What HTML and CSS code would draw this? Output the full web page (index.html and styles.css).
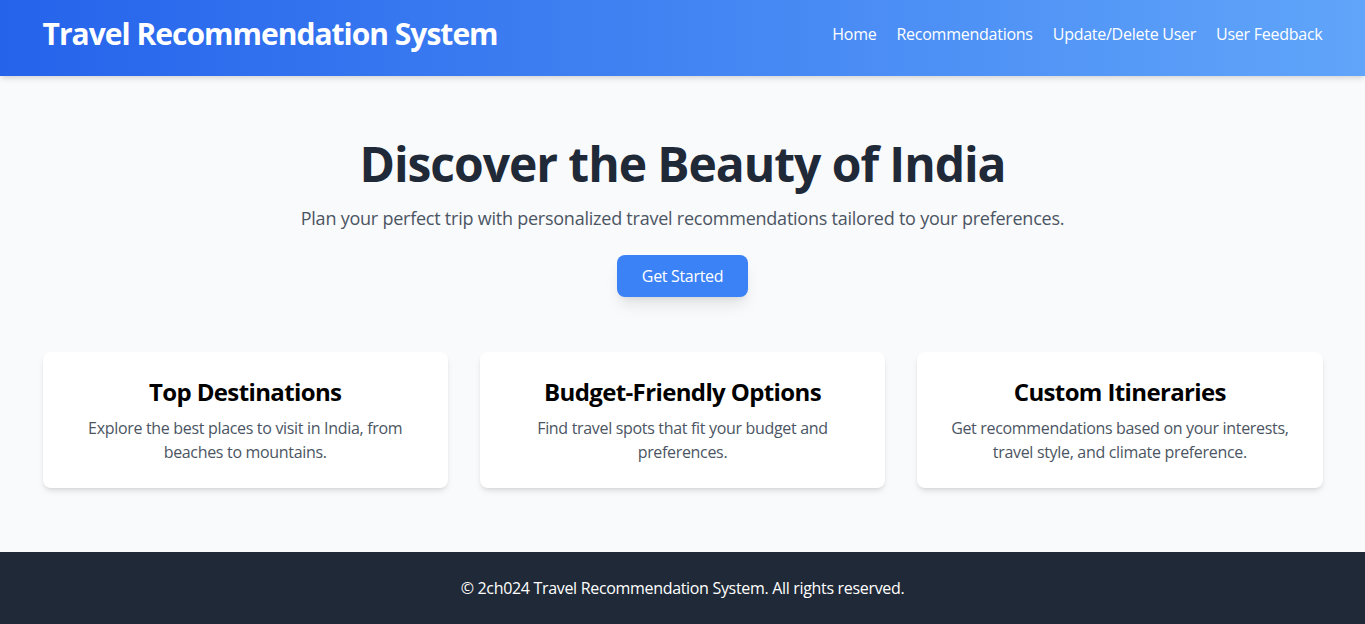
FILE: index.html
```html
<!DOCTYPE html>
<html lang="en">
<head>
<meta charset="utf-8">
<title>Travel Recommendation System</title>
<link rel="stylesheet" href="styles.css">
</head>
<body>
<header class="site-header">
  <div class="container header-inner">
    <h1 class="brand">Travel Recommendation System</h1>
    <nav class="nav">
      <a href="#">Home</a>
      <a href="#">Recommendations</a>
      <a href="#">Update/Delete User</a>
      <a href="#">User Feedback</a>
    </nav>
  </div>
</header>
<main class="container main">
  <section class="hero">
    <h2 class="hero-title">Discover the Beauty of India</h2>
    <p class="hero-text">Plan your perfect trip with personalized travel recommendations tailored to your preferences.</p>
    <a href="#" class="btn">Get Started</a>
  </section>
  <section class="cards">
    <div class="card">
      <h3 class="card-title">Top Destinations</h3>
      <p class="card-text">Explore the best places to visit in India, from beaches to mountains.</p>
    </div>
    <div class="card">
      <h3 class="card-title">Budget-Friendly Options</h3>
      <p class="card-text">Find travel spots that fit your budget and preferences.</p>
    </div>
    <div class="card">
      <h3 class="card-title">Custom Itineraries</h3>
      <p class="card-text">Get recommendations based on your interests, travel style, and climate preference.</p>
    </div>
  </section>
</main>
<footer class="footer">
  <p>© 2ch024 Travel Recommendation System. All rights reserved.</p>
</footer>
</body>
</html>
```
FILE: styles.css
```css
* { box-sizing: border-box; }
html, body { margin: 0; padding: 0; }
body {
  font-family: "Open Sans", "Noto Sans", sans-serif;
  background: #f9fafb;
  color: #1f2937;
  font-size: 16px;
  line-height: 24px;
  letter-spacing: -0.02em;
}
.container {
  max-width: 1280px;
  margin: 0 auto;
}
.site-header {
  background: linear-gradient(to right, #2563eb, #60a5fa);
  box-shadow: 0 4px 6px -1px rgba(0,0,0,0.1), 0 2px 4px -2px rgba(0,0,0,0.1);
  color: #fff;
}
.header-inner {
  display: flex;
  align-items: center;
  justify-content: space-between;
  padding: 16px 0 24px;
}
.brand {
  margin: 0;
  font-size: 30px;
  line-height: 36px;
  font-weight: 700;
  letter-spacing: -0.033em;
}
.nav {
  display: flex;
  gap: 20px;
}
.nav a {
  color: #fff;
  text-decoration: none;
  font-size: 16px;
  letter-spacing: -0.016em;
}
.main {
  padding: 64px 0;
}
.hero {
  display: flex;
  flex-direction: column;
  align-items: center;
  text-align: center;
}
.hero-title {
  margin: 0 0 16px;
  font-size: 48px;
  line-height: 48px;
  font-weight: 700;
  color: #1f2937;
  letter-spacing: -0.022em;
}
.hero-text {
  margin: 0 0 23px;
  font-size: 18px;
  line-height: 28px;
  color: #4b5563;
  letter-spacing: -0.013em;
}
.btn {
  display: inline-block;
  background: #3b82f6;
  color: #fff;
  text-decoration: none;
  padding: 9px 25px;
  border-radius: 8px;
  box-shadow: 0 10px 15px -3px rgba(0,0,0,0.1), 0 4px 6px -4px rgba(0,0,0,0.1);
}
.cards {
  margin-top: 55px;
  display: grid;
  grid-template-columns: repeat(3, 1fr);
  gap: 32px;
}
.card {
  background: #fff;
  border-radius: 8px;
  padding: 24px;
  text-align: center;
  box-shadow: 0 4px 6px -1px rgba(0,0,0,0.1), 0 2px 4px -2px rgba(0,0,0,0.1);
}
.card-title {
  margin: 0 0 8px;
  font-size: 24px;
  line-height: 32px;
  font-weight: 700;
  color: #000;
  letter-spacing: -0.026em;
}
.card-text {
  margin: 0;
  color: #4b5563;
}
.footer {
  background: #1f2937;
  color: #fff;
  text-align: center;
  padding: 24px 0;
}
.footer p { margin: 0; }
```
